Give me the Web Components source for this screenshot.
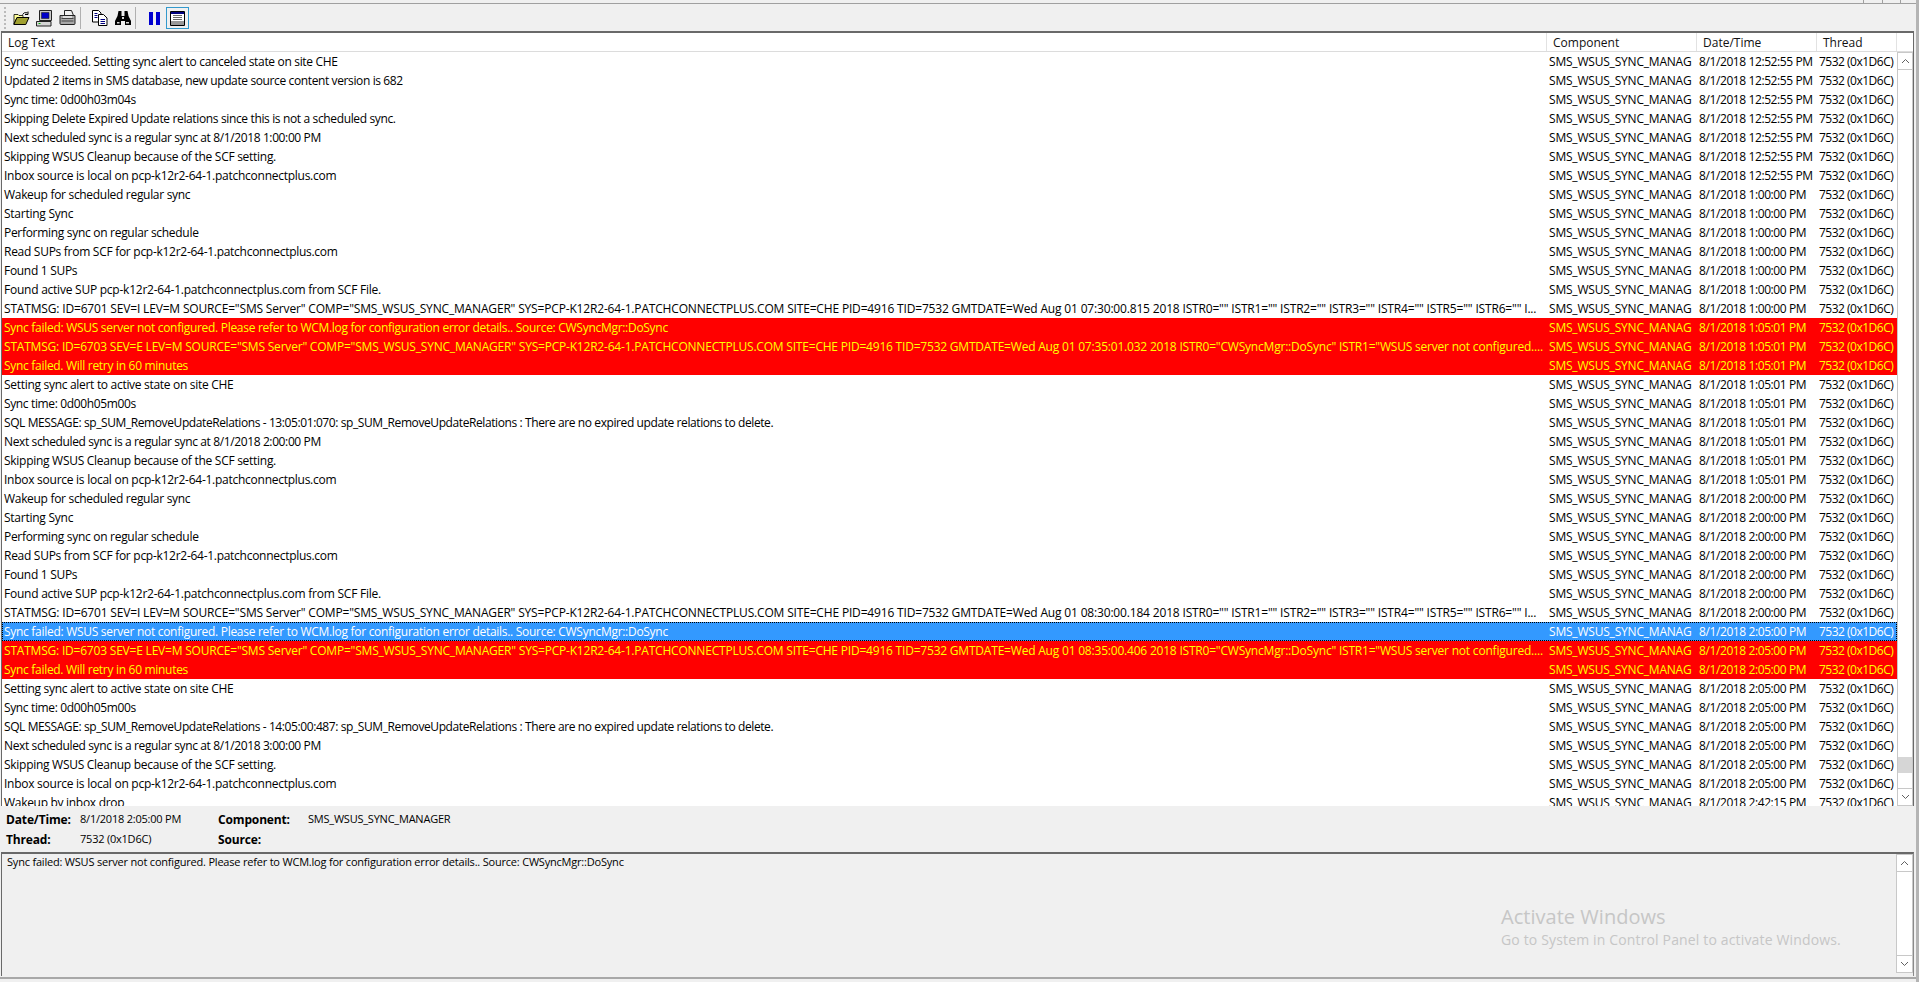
<!DOCTYPE html>
<html><head><meta charset="utf-8"><style>
html,body{margin:0;height:100%;overflow:hidden;background:#f0f0f0}
body{font:12px/19px "Open Sans","Noto Sans",sans-serif;color:#000}
</style></head><body>
<trace-app></trace-app>
<script>
const icons={
open:`<svg width="17" height="15" viewBox="0 0 17 15"><path d="M1 3.500h4l1 1h4v2H4L1 13z" fill="#ffff99" stroke="#000" stroke-width=".8"/><path d="M.8 13.500l3.200-7h12l-3.200 7z" fill="#a0a030" stroke="#000"/><path d="M9.500 3.500Q11 .8 14.500 1.800M15 .5v3h-3" fill="none" stroke="#000"/></svg>`,
pc:`<svg width="17" height="17" viewBox="0 0 17 17"><path d="M3.500.5h12v10h-12z" fill="#c8c8c8" stroke="#222"/><path d="M5.500 2.500h7.500v6H5.500z" fill="#0000c8" stroke="#222" stroke-width=".6"/><path d="M.5 11.500h14.500v4.500H.5z" fill="#d4d4d4" stroke="#222"/><path d="M2.500 13.500h2" stroke="#00b000"/></svg>`,
print:`<svg width="17" height="16" viewBox="0 0 17 16"><path d="M5.500.5h7l2 5h-9z" fill="#f0f0f0" stroke="#222"/><path d="M1 5.500h15v8q0 1-1 1H2q-1 0-1-1z" fill="#a8a8a8" stroke="#222"/><path d="M2.500 8.500h12M2.500 11h12" stroke="#444"/><path d="M4 6h9v2H4z" fill="#ddd"/></svg>`,
copy:`<svg width="16" height="16" viewBox="0 0 16 16"><path d="M.5.500h6l2.500 2.500v9H.5z" fill="#fff" stroke="#000"/><path d="M6.500 4.500h5l3.500 3.500v7.500H6.500z" fill="#fff" stroke="#000"/><path d="M2.500 3.500h3M2.500 5.500h3M2.500 7.500h3M8.500 9.500h4.500M8.500 11.500h4.500M8.500 13.500h4.500" stroke="#000080"/></svg>`,
find:`<svg width="16" height="14" viewBox="0 0 16 14"><path d="M3.500 0h3v5h3V0h3l1 5 2.500 5v4h-6v-4H6v4H0v-4l2.500-5z" fill="#000"/><path d="M2 11h2.500v1.500H2zM11 11h3v1.500h-3zM7 6h2v2H7z" fill="#d8d8d8"/></svg>`,
pause:`<svg width="11" height="13" viewBox="0 0 11 13"><path d="M0 0h4v13H0zM7 0h4v13H7z" fill="#0000d0"/></svg>`,
pane:`<svg width="15" height="15" viewBox="0 0 15 15"><path d="M.5.500h14v14H.5z" fill="#fff" stroke="#000"/><path d="M1 1h13v2H1z" fill="#000080"/><path d="M3 4.500h9M3 6.500h9M3 8.500h9" stroke="#666"/><path d="M1 10h13v4H1z" fill="#999"/></svg>`};

class TbButton extends HTMLElement{constructor(){super();this.attachShadow({mode:'open'}).innerHTML=`<style>:host{display:flex;width:23px;height:22px;align-items:center;justify-content:center;box-sizing:border-box}:host([active]){border:1px solid #3399cc}</style>${icons[this.getAttribute('icon')]||''}`}}
class TbSep extends HTMLElement{constructor(){super();this.attachShadow({mode:'open'}).innerHTML=`<style>:host{display:block;width:1px;height:22px;background:#b0b0b0;margin:0 7px 0 1px}</style>`}}
class LogRow extends HTMLElement{constructor(){super();const a=['c','d','t'].map(k=>this.getAttribute(k));
this.attachShadow({mode:'open'}).innerHTML=`<style>
:host{display:grid;grid-template-columns:1544px 150px 120px 81px;height:19px;flex:none;white-space:nowrap;box-sizing:border-box}
:host([k=e]){background:#f00;color:#ff0}:host([k=s]){background:#3399ff;color:#fff;outline:1px dotted #000;outline-offset:-1px}
div{overflow:visible;min-width:0;line-height:20px;height:19px}
.m{padding-left:2px;letter-spacing:var(--l,-.3px)}
.c2{padding-left:3px;letter-spacing:-.2px}.c3{padding-left:3px;letter-spacing:-.4px}.c4{padding-left:3px;letter-spacing:-.5px}
</style><div class="m"><slot></slot></div><div class="c2">${a[0]}</div><div class="c3">${a[1]}</div><div class="c4">${a[2]}</div>`}}
class ScrollBar extends HTMLElement{constructor(){super();const th=this.getAttribute('thumb');
this.attachShadow({mode:'open'}).innerHTML=`<style>
:host{display:flex;flex-direction:column;width:17px;box-sizing:border-box;border:1px solid #c8c8c8;background:#fff;flex:none}
.b{height:16px;flex:none;display:flex;align-items:center;justify-content:center;background:#fff}
.t{flex:1;position:relative;border-block:1px solid #c8c8c8}
.th{position:absolute;left:0;right:0;height:16px;background:#d6d6d6;top:${th}px}
</style><div class="b"><svg width="9" height="6" viewBox="0 0 9 6"><path d="M1 5l3.500-3.500L8 5" fill="none" stroke="#606060"/></svg></div><div class="t">${th?'<div class="th"></div>':''}</div><div class="b"><svg width="9" height="6" viewBox="0 0 9 6"><path d="M1 1l3.500 3.500L8 1" fill="none" stroke="#606060"/></svg></div>`}}
customElements.define('tb-button',TbButton);customElements.define('tb-sep',TbSep);customElements.define('log-row',LogRow);customElements.define('scroll-bar',ScrollBar);

const C='SMS_WSUS_SYNC_MANAG',T='7532 (0x1D6C)';
const dom='pcp-k12r2-64-1.patchconnectplus.com';
const stat=(id,sev,gmt,rest)=>`STATMSG: ID=${id} SEV=${sev} LEV=M SOURCE="SMS Server" COMP="SMS_WSUS_SYNC_MANAGER" SYS=PCP-K12R2-64-1.PATCHCONNECTPLUS.COM SITE=CHE PID=4916 TID=7532 GMTDATE=Wed Aug 01 ${gmt} 2018 ${rest}`;
const empt='ISTR0="" ISTR1="" ISTR2="" ISTR3="" ISTR4="" ISTR5="" ISTR6="" I...';
const err='ISTR0="CWSyncMgr::DoSync" ISTR1="WSUS server not configured....';
const fail='Sync failed: WSUS server not configured. Please refer to WCM.log for configuration error details.. Source: CWSyncMgr::DoSync';
const rows=[
['Sync succeeded. Setting sync alert to canceled state on site CHE','12:52:55','',-.33],
['Updated 2 items in SMS database, new update source content version is 682','12:52:55','',-.38],
['Sync time: 0d00h03m04s','12:52:55','',-.36],
['Skipping Delete Expired Update relations since this is not a scheduled sync.','12:52:55','',-.36],
['Next scheduled sync is a regular sync at 8/1/2018 1:00:00 PM','12:52:55','',-.38],
['Skipping WSUS Cleanup because of the SCF setting.','12:52:55','',-.28],
['Inbox source is local on '+dom,'12:52:55','',-.26],
['Wakeup for scheduled regular sync','1:00:00','',-.31],
['Starting Sync','1:00:00','',-.25],
['Performing sync on regular schedule','1:00:00','',-.3],
['Read SUPs from SCF for '+dom,'1:00:00','',-.28],
['Found 1 SUPs','1:00:00','',-.3],
['Found active SUP '+dom+' from SCF File.','1:00:00','',-.24],
[stat(6701,'I','07:30:00.815',empt),'1:00:00','',-.17],
[fail,'1:05:01','e',-.29],
[stat(6703,'E','07:35:01.032',err),'1:05:01','e',-.205],
['Sync failed. Will retry in 60 minutes','1:05:01','e',-.3],
['Setting sync alert to active state on site CHE','1:05:01','',-.3],
['Sync time: 0d00h05m00s','1:05:01','',-.36],
['SQL MESSAGE: sp_SUM_RemoveUpdateRelations - 13:05:01:070: sp_SUM_RemoveUpdateRelations : There are no expired update relations to delete.','1:05:01','',-.405],
['Next scheduled sync is a regular sync at 8/1/2018 2:00:00 PM','1:05:01','',-.38],
['Skipping WSUS Cleanup because of the SCF setting.','1:05:01','',-.28],
['Inbox source is local on '+dom,'1:05:01','',-.26],
['Wakeup for scheduled regular sync','2:00:00','',-.31],
['Starting Sync','2:00:00','',-.25],
['Performing sync on regular schedule','2:00:00','',-.3],
['Read SUPs from SCF for '+dom,'2:00:00','',-.28],
['Found 1 SUPs','2:00:00','',-.3],
['Found active SUP '+dom+' from SCF File.','2:00:00','',-.24],
[stat(6701,'I','08:30:00.184',empt),'2:00:00','',-.17],
[fail,'2:05:00','s',-.29],
[stat(6703,'E','08:35:00.406',err),'2:05:00','e',-.205],
['Sync failed. Will retry in 60 minutes','2:05:00','e',-.3],
['Setting sync alert to active state on site CHE','2:05:00','',-.3],
['Sync time: 0d00h05m00s','2:05:00','',-.36],
['SQL MESSAGE: sp_SUM_RemoveUpdateRelations - 14:05:00:487: sp_SUM_RemoveUpdateRelations : There are no expired update relations to delete.','2:05:00','',-.405],
['Next scheduled sync is a regular sync at 8/1/2018 3:00:00 PM','2:05:00','',-.38],
['Skipping WSUS Cleanup because of the SCF setting.','2:05:00','',-.28],
['Inbox source is local on '+dom,'2:05:00','',-.26],
['Wakeup by inbox drop','2:42:15','',-.3],
];
const esc=s=>s.replace(/&/g,'&amp;').replace(/"/g,'&quot;').replace(/</g,'&lt;');
class TraceApp extends HTMLElement{constructor(){super();
this.attachShadow({mode:'open'}).innerHTML=`<style>
:host{display:flex;flex-direction:column;height:982px;width:1919px;box-sizing:border-box;padding:3px 0 3px;border-right:3px solid #b4b4b4;position:relative;background:#f0f0f0;overflow:hidden;font:inherit}
.tb{height:28px;display:flex;align-items:center;padding:1px 0 0 10px;flex:none;position:relative;box-sizing:border-box;border-top:1px solid #a0a0a0}
.grip{position:absolute;left:4px;top:3px;width:2px;height:22px;background:repeating-linear-gradient(#bbb 0 2px,transparent 2px 4px)}
.rt{position:absolute;top:0;right:0;width:53px;height:3px;display:grid;grid-template-columns:19px 18px 16px}
.rt i{border-left:1px solid #a0a0a0}
.list{flex:none;margin:0 2px 0 1px;border-top:2px solid #696969;border-left:1px solid #696969;border-right:1px solid #696969;display:flex;flex-direction:column;background:#fff;box-sizing:border-box;height:775px}
.hd{display:grid;grid-template-columns:1545px 150px 120px 80px 1fr;height:19px;flex:none;background:#fff;box-sizing:border-box;border-bottom:1px solid #dcdcdc;color:#111}
.hd div{padding-left:6px;border-right:1px solid #e2e2e2;line-height:20px;height:18px}
.hd div:last-child{border:0}
.body{flex:1;display:flex;min-height:0}
.rows{width:1895px;flex:none;display:flex;flex-direction:column;overflow:hidden}
.body scroll-bar{width:16px}
.det{height:46px;flex:none;display:grid;grid-template-columns:74px 138px 90px 1fr;grid-auto-rows:20px;padding:4px 0 0 6px;box-sizing:border-box;font-size:11px;letter-spacing:-.22px}
.det span{margin-top:-1px}
.det b{font-weight:700;font-size:12px;letter-spacing:-.15px}
.msg{flex:1;margin:0 2px 0 1px;border-top:2px solid #696969;border-left:1px solid #696969;border-right:1px solid #8a8a8a;display:flex;min-height:0;padding-bottom:3px}
.txt{flex:1;padding-left:5px;font-size:11px;line-height:15px;letter-spacing:-.2px}
.foot{height:2px;margin-top:1px;background:#a8a8a8;flex:none}
.wm{position:absolute;left:1501px;top:903px;color:#c6c6c6}
.wm .a{font:20px/27px "Open Sans",sans-serif;letter-spacing:.03px}
.wm .b{font:14px/20px "Open Sans",sans-serif;letter-spacing:.15px}
</style>
<div class="rt"><i></i><i></i><i></i></div>
<div class="tb"><span class="grip"></span>
<tb-button icon="open"></tb-button><tb-button icon="pc"></tb-button><tb-button icon="print"></tb-button><tb-sep></tb-sep>
<tb-button icon="copy"></tb-button><tb-button icon="find"></tb-button><tb-sep></tb-sep>
<tb-button icon="pause"></tb-button><tb-button icon="pane" active></tb-button></div>
<div class="list"><div class="hd"><div>Log Text</div><div>Component</div><div>Date/Time</div><div>Thread</div><div></div></div>
<div class="body"><div class="rows">${rows.map(r=>`<log-row ${r[2]?`k="${r[2]}"`:''} style="--l:${r[3]}px" c="${C}" d="8/1/2018 ${r[1]} PM" t="${T}">${esc(r[0])}</log-row>`).join('')}</div><scroll-bar thumb="687"></scroll-bar></div></div>
<div class="det"><b>Date/Time:</b><span>8/1/2018 2:05:00 PM</span><b>Component:</b><span>SMS_WSUS_SYNC_MANAGER</span><b>Thread:</b><span>7532 (0x1D6C)</span><b>Source:</b><span></span></div>
<div class="msg"><div class="txt">${fail}</div><scroll-bar></scroll-bar></div>
<div class="foot"></div>
<div class="wm"><div class="a">Activate Windows</div><div class="b">Go to System in Control Panel to activate Windows.</div></div>`}}
customElements.define('trace-app',TraceApp);
</script></body></html>
